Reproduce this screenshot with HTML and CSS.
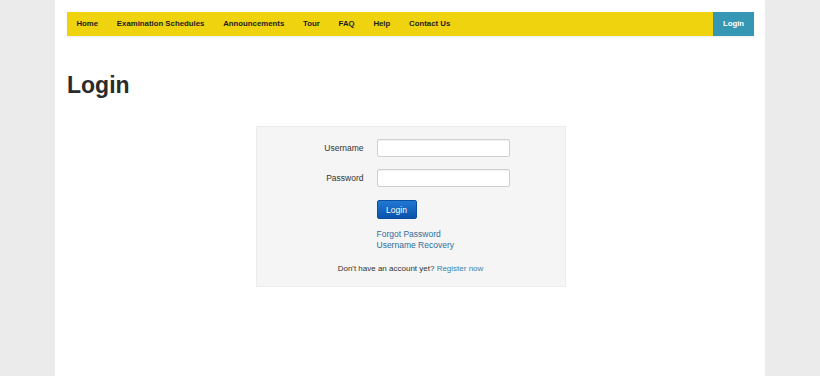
FILE: index.html
```html
<!DOCTYPE html>
<html lang="en">
<head>
    <meta charset="UTF-8">
    <meta name="viewport" content="width=device-width, initial-scale=1.0">
    <title>Login</title>
    <link rel="stylesheet" href="styles.css">
</head>
<body>
    <!-- page wrapper -->
    <div class="page">
        <!-- top menu -->
        <nav class="menu">
            <ul class="menu-left">
                <li><a href="#">Home</a></li>
                <li><a href="#">Examination Schedules</a></li>
                <li><a href="#">Announcements</a></li>
                <li><a href="#">Tour</a></li>
                <li><a href="#">FAQ</a></li>
                <li><a href="#">Help</a></li>
                <li><a href="#">Contact Us</a></li>
            </ul>
            <a href="#" class="menu-login">Login</a>
        </nav>

        <h1 class="page-title">Login</h1>

        <!-- login box -->
        <form class="login-box">
            <div class="form-row">
                <label for="username">Username</label>
                <input type="text" id="username" class="field">
            </div>
            <div class="form-row">
                <label for="password">Password</label>
                <input type="password" id="password" class="field">
            </div>
            <div class="form-row">
                <span></span>
                <button type="button" class="btn-login">Login</button>
            </div>
            <div class="form-row links">
                <span></span>
                <div>
                    <a href="#">Forgot Password</a><br>
                    <a href="#">Username Recovery</a>
                </div>
            </div>
            <p class="register">Don't have an account yet? <a href="#">Register now</a></p>
        </form>
    </div>
</body>
</html>
```

FILE: styles.css
```css
/* base */
body {
    margin: 0;
    background-color: #ebebeb;
    font-family: "Liberation Sans", Arial, sans-serif;
    color: #333;
}

.page {
    width: 687px;
    min-height: 364px;
    margin: 0 auto;
    padding: 12px 11px 0 12px;
    background-color: #fff;
}

/* top menu */
.menu {
    display: flex;
    justify-content: space-between;
    height: 24px;
    background-color: #efd30f;
    box-shadow: 0 1px 2px rgba(0,0,0,0.08);
}

.menu-left {
    display: flex;
    margin: 0;
    padding: 0;
    list-style: none;
}

.menu-left a,
.menu-login {
    display: block;
    padding: 0 9.4px;
    line-height: 24px;
    font-size: 7.8px;
    font-weight: bold;
    color: #1d1d1d;
    text-decoration: none;
}

.menu-login {
    width: 41px;
    padding: 0;
    text-align: center;
    background-color: #3597b3;
    color: #fff;
}

.page-title {
    margin: 37px 0 0 0;
    font-size: 23px;
    line-height: 24px;
    font-weight: bold;
    color: #2b2b2b;
}

/* login box */
.login-box {
    width: 308px;
    margin: 29px auto 0 auto;
    padding: 12px 0 13px 0;
    background-color: #f5f5f5;
    border: 1px solid #ececec;
    font-size: 8.5px;
}

.form-row {
    display: grid;
    grid-template-columns: 107px 133px;
    column-gap: 13px;
    align-items: center;
    margin-bottom: 12px;
}

.form-row label {
    text-align: right;
    color: #333;
}

.field {
    box-sizing: border-box;
    width: 133px;
    height: 18px;
    margin: 0;
    padding: 2px 4px;
    background-color: #fff;
    border: 1px solid #cfcfcf;
    border-radius: 2px;
    box-shadow: inset 0 1px 1px rgba(0,0,0,0.06);
}

.btn-login {
    justify-self: start;
    width: 40px;
    height: 19px;
    margin-top: 1px;
    padding: 0;
    border: 1px solid #0b4d9e;
    border-radius: 2px;
    background: linear-gradient(#2179d3, #0a52ab);
    color: #fff;
    font-family: inherit;
    font-size: 8.5px;
}

.links {
    margin-top: -2px;
    line-height: 11px;
}

.links a,
.register a {
    color: #2d6e9c;
    text-decoration: none;
}

.register {
    margin: 0;
    padding-top: 1px;
    text-align: center;
    font-size: 8px;
    color: #333;
}

.register a {
    color: #3d82aa;
}
```
